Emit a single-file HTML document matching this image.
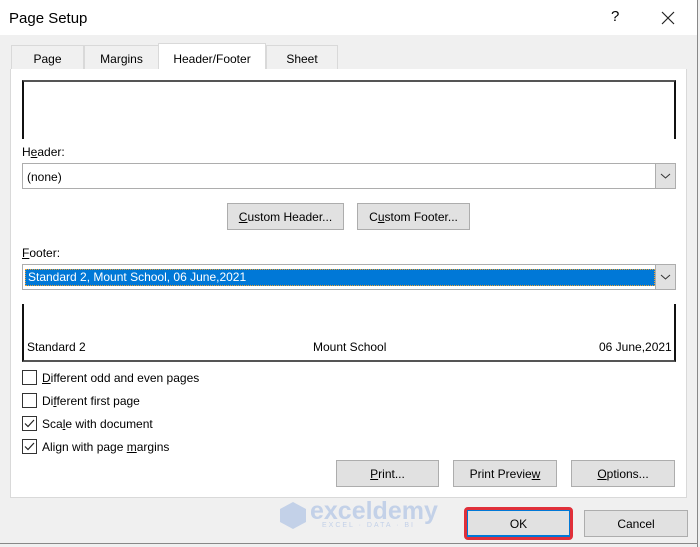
<!DOCTYPE html>
<html><head><style>
*{box-sizing:border-box;margin:0;padding:0}
body{width:700px;height:547px;overflow:hidden;background:#f0f0f0;font-family:"Liberation Sans",sans-serif;font-size:12px;color:#000;position:relative}
.a{position:absolute}
.btn{position:absolute;background:#e1e1e1;border:1px solid #adadad;text-align:center;font-size:12px;line-height:26px}
.cb{position:absolute;left:22px;width:15px;height:15px;border:1px solid #333;background:#fff}
.lbl{position:absolute;left:42px;font-size:12px}
.dd{position:absolute;right:0;top:0;width:20px;height:100%;background:#e1e1e1;border-left:1px solid #adadad}
u{text-decoration:underline}
</style></head><body>
<div class="a" style="left:0;top:0;width:697px;height:35px;background:#fff"></div>
<div class="a" style="left:9px;top:10px;font-size:15px">Page Setup</div>
<div class="a" style="left:611px;top:8px;font-size:15px">?</div>
<svg class="a" style="left:661px;top:11px" width="14" height="14"><path d="M1 1L13 13M13 1L1 13" stroke="#222" stroke-width="1.2"/></svg>
<div class="a" style="left:697px;top:0;width:1px;height:547px;background:#888"></div>
<div class="a" style="left:0;top:543px;width:697px;height:1px;background:#888"></div>
<!-- tabs -->
<div class="a" style="left:11px;top:45px;width:73px;height:25px;background:#f0f0f0;border:1px solid #d9d9d9;text-align:center;line-height:26px">Page</div>
<div class="a" style="left:84px;top:45px;width:75px;height:25px;background:#f0f0f0;border:1px solid #d9d9d9;text-align:center;line-height:26px">Margins</div>
<div class="a" style="left:158px;top:43px;width:108px;height:27px;background:#fff;border:1px solid #d9d9d9;border-bottom:none;text-align:center;line-height:30px">Header/Footer</div>
<div class="a" style="left:266px;top:45px;width:72px;height:25px;background:#f0f0f0;border:1px solid #d9d9d9;text-align:center;line-height:26px">Sheet</div>
<div class="a" style="left:10px;top:69px;width:677px;height:429px;background:#fff;border:1px solid #d9d9d9;border-top:none"></div>
<div class="a" style="left:159px;top:68px;width:106px;height:3px;background:#fff"></div>
<!-- header preview -->
<div class="a" style="left:22px;top:80px;width:654px;height:59px;border:2px solid #111;border-top-color:#555;border-bottom:none"></div>
<div class="a" style="left:22px;top:145px">H<u>e</u>ader:</div>
<div class="a" style="left:22px;top:163px;width:654px;height:26px;border:1px solid #adadad;background:#fff"><div class="a" style="left:4px;top:6px">(none)</div><div class="dd"><svg width="19" height="24"><path d="M5 10L9.5 14L14 10" stroke="#333" fill="none"/></svg></div></div>
<div class="btn" style="left:227px;top:203px;width:117px;height:27px"><u>C</u>ustom Header...</div>
<div class="btn" style="left:357px;top:203px;width:113px;height:27px">C<u>u</u>stom Footer...</div>
<div class="a" style="left:22px;top:246px"><u>F</u>ooter:</div>
<div class="a" style="left:22px;top:264px;width:654px;height:26px;border:1px solid #adadad;background:#fff"><div class="a" style="left:2px;top:4px;width:630px;height:17px;background:#0078d7;border:1px dotted #f0a030;color:#fff;padding-left:2px;line-height:15px">Standard 2, Mount School, 06 June,2021</div><div class="dd"><svg width="19" height="24"><path d="M5 10L9.5 14L14 10" stroke="#333" fill="none"/></svg></div></div>
<!-- footer preview -->
<div class="a" style="left:22px;top:304px;width:654px;height:58px;border:2px solid #111;border-top:none;border-bottom-color:#555"></div>
<div class="a" style="left:27px;top:340px">Standard 2</div>
<div class="a" style="left:313px;top:340px">Mount School</div>
<div class="a" style="left:599px;top:340px">06 June,2021</div>
<!-- checkboxes -->
<div class="cb" style="top:370px"></div><div class="lbl" style="top:371px"><u>D</u>ifferent odd and even pages</div>
<div class="cb" style="top:393px"></div><div class="lbl" style="top:394px">Di<u>f</u>ferent first page</div>
<div class="cb" style="top:416px"><svg width="13" height="13"><path d="M2 6.5L5 9.5L11 3" stroke="#222" fill="none" stroke-width="1.2"/></svg></div><div class="lbl" style="top:417px">Sca<u>l</u>e with document</div>
<div class="cb" style="top:439px"><svg width="13" height="13"><path d="M2 6.5L5 9.5L11 3" stroke="#222" fill="none" stroke-width="1.2"/></svg></div><div class="lbl" style="top:440px">Align with page <u>m</u>argins</div>
<div class="btn" style="left:336px;top:460px;width:103px;height:27px"><u>P</u>rint...</div>
<div class="btn" style="left:453px;top:460px;width:104px;height:27px">Print Previe<u>w</u></div>
<div class="btn" style="left:571px;top:460px;width:104px;height:27px"><u>O</u>ptions...</div>
<!-- watermark -->
<svg class="a" style="left:278px;top:500px" width="30" height="30"><path d="M15 2L28 9V22L15 29L2 22V9Z" fill="#c3d1e8"/></svg>
<div class="a" style="left:310px;top:497px;font-size:25px;font-weight:bold;color:#c3d1e8">exceldemy</div>
<div class="a" style="left:322px;top:522px;font-size:7px;color:#c3d1e8;letter-spacing:2px">EXCEL · DATA · BI</div>
<div class="a" style="left:464px;top:507px;width:109px;height:33px;border:3px solid #e0303a;border-radius:4px"></div>
<div class="btn" style="left:467px;top:510px;width:103px;height:27px;border:1px solid #0078d7;border-bottom:2px solid #0078d7">OK</div>
<div class="btn" style="left:584px;top:510px;width:104px;height:27px">Cancel</div>
</body></html>
